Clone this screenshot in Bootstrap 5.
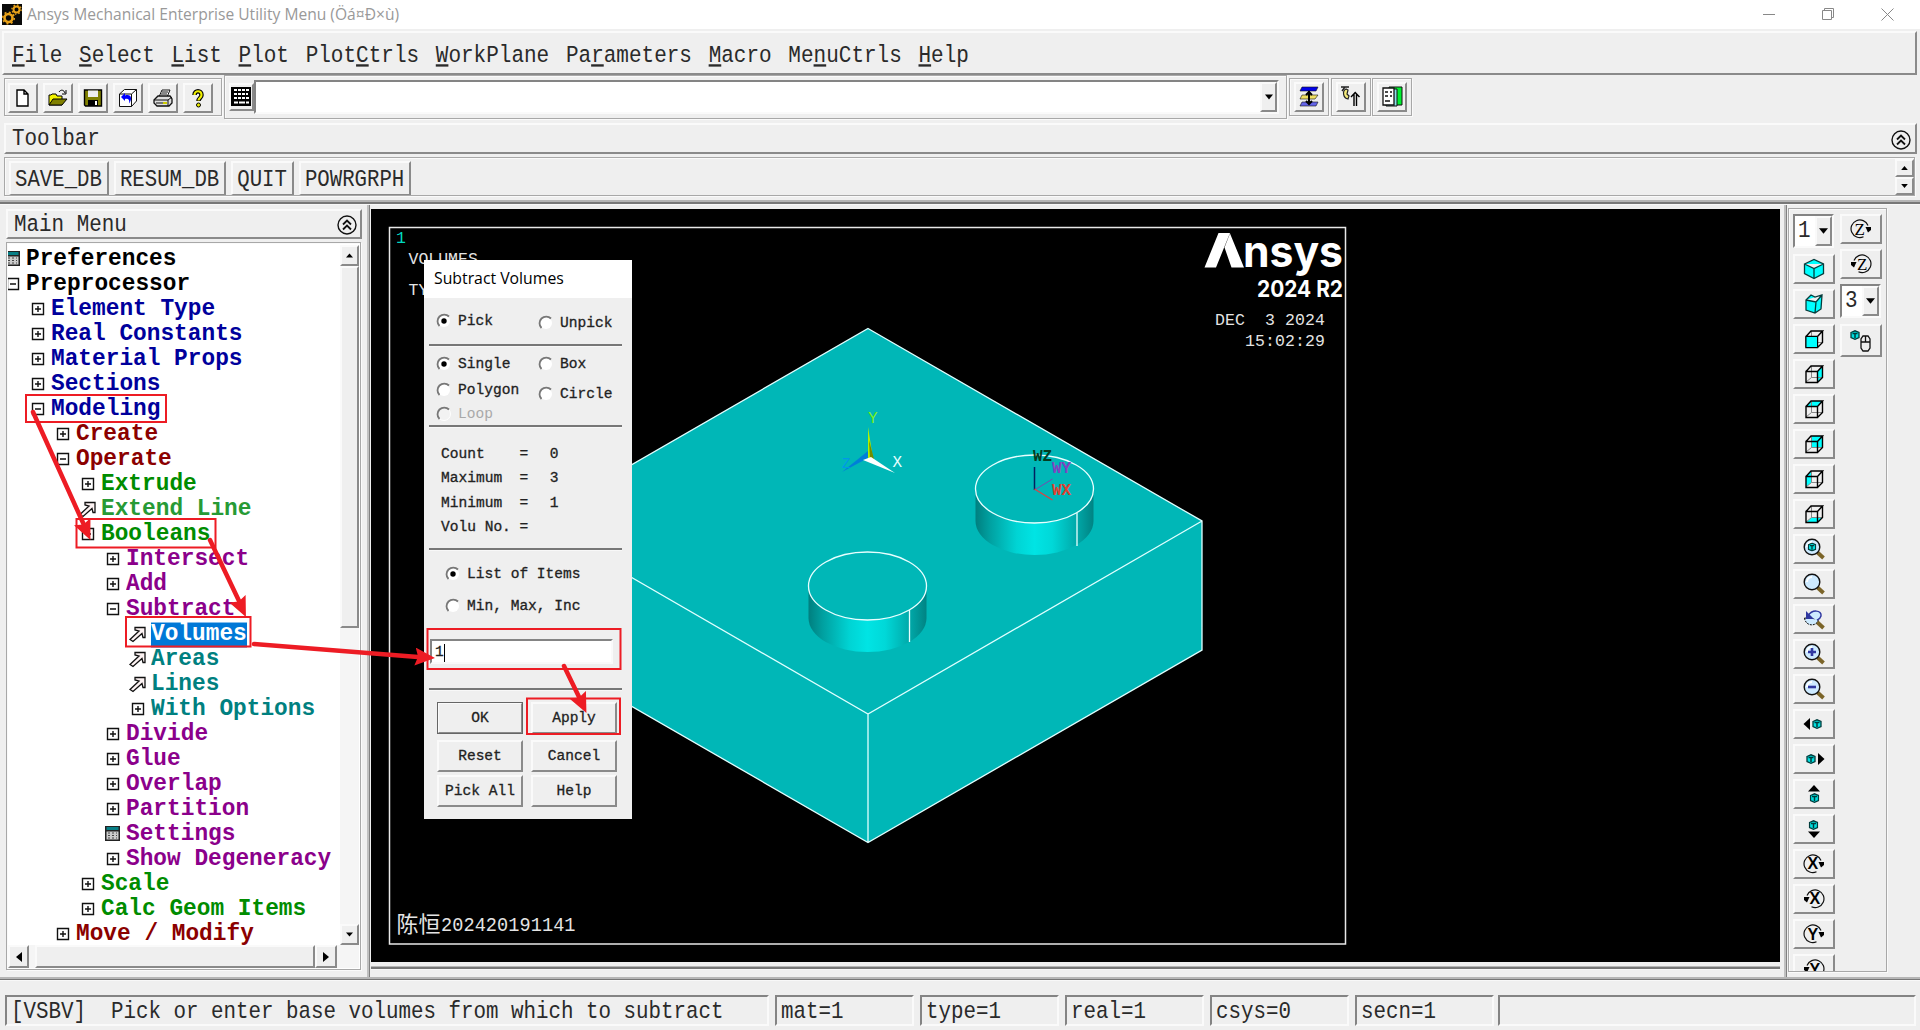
<!DOCTYPE html>
<html lang="en">
<head>
<meta charset="utf-8">
<title>Ansys Mechanical Enterprise Utility Menu</title>
<link rel="stylesheet" href="https://cdn.jsdelivr.net/npm/bootstrap@5.3.0/dist/css/bootstrap.min.css">
<style>
  html, body { width:1920px; height:1030px; overflow:hidden; }
  body { background:#efefef; color:#2a2a2a; font-family:"Liberation Mono","Noto Sans CJK SC",monospace; font-size:20.9px; line-height:1; position:relative; }
  svg { display:block; flex:none; }
  .mono { display:inline-block; white-space:pre; transform:scaleY(1.17); line-height:1; }
  .raised { border:2px solid; border-color:#fafafa #8a8a8a #8a8a8a #fafafa; background:#efefef; }
  .etched { border:1px solid #a8a8a8; box-shadow:inset 1px 1px #fafafa, 1px 1px #fafafa; }
  .sunken { border:2px solid; border-color:#848484 #fafafa #fafafa #848484; }
  .titlebar { height:29px; background:#fff; font-family:"Open Sans",sans-serif; color:#999; padding-left:2px; }
  .titlebar .caption { font-size:15.6px; margin-left:5px; white-space:nowrap; }
  .wincontrols { gap:46px; margin-right:26px; }
  .menubar { height:44px; margin:2px 3px 0 2px; padding:4px 0 0 8px; gap:16.7px; font-size:21px; border-width:2px; }
  .menubar u { text-decoration-thickness:2px; text-underline-offset:2px; }
  .iconbar { height:44px; margin:0 4px; gap:2px; }
  .icongroup { height:38px; width:218px; padding:4px 3px; gap:5px; }
  .tbtn { width:30px; height:30px; }
  .cmdgroup { width:1063px; height:44px; padding:4px 7px 4px 4px; }
  .cmdinput { height:34px; background:#fff; }
  .solo { width:40px; height:38px; padding:3px 4px; }
  .solo + .solo { margin-left:-.5px; }
  .tbtitle { height:31px; margin:4px 3px 0 4px; padding:2px 4px 0 6px; }
  .tbbuttons { height:39px; margin:3px 5px 0 4px; padding-left:4px; }
  .tbbuttons .abbr { height:34px; padding:7px 5px 0 4px; margin-right:5px; border-bottom-width:1px; font-size:20.7px; }
  .spin { width:19px; height:18px; }
  .band { height:4px; background:linear-gradient(#b5b5b5 50%,#777 50%); border-bottom:1px solid #f8f8f8; }
  .workarea { height:772px; }
  .leftpane { width:367px; padding:4px 5px 0 6px; }
  .lefttitle { height:30px; width:356px; padding:2px 3px 0 6px; }
  .treebox { height:728px; width:355px; margin-top:3px; background:#fff; padding:2px 1px 1px 1px; }
  .tree { width:332px; height:700px; overflow:hidden; font-weight:700; font-size:22.8px; padding-top:2px; background:#fff; }
  .node { height:25px; white-space:pre; }
  .node svg { margin-right:4px; margin-left:-5px; width:19px; }
  .node span { transform:scaleY(1.04); padding-bottom:1px; }
  .l1 { padding-left:25px; color:#00009c; } .l2 { padding-left:50px; color:#8b0000; }
  .l3 { padding-left:75px; color:#008c00; } .l4 { padding-left:100px; color:#8b008b; }
  .l5 { padding-left:125px; color:#008080; }
  .node .sel { background:#0078d7; color:#fff; }
  .lighter { color:#279a35; }
  .track { background:#f5f5f5; }
  .vdiv { width:4px; background:linear-gradient(90deg,#c0c0c0 40%,#808080 40%,#808080 75%,#efefef 75%); }
  .viewport { width:1409px; margin-top:4px; }
  .rightpane { padding:3px 0 0 0; }
  .rightbox { width:99px; height:764px; padding:5px 3px 0 4px; gap:4px; overflow:hidden; }
  .rcol { width:43px; gap:5px; }
  .rbtn { width:42px; height:30px; flex:none; }
  .rsel { width:41px; height:34px; background:#fff; margin-bottom:1px; flex:none; padding-left:3px; }
  .drop { width:17px; height:100%; }
  .status { height:31px; margin:14px 4px 0 5px; gap:6px; font-size:20.83px; }
  .cell { width:139px; padding:5px 0 0 4px; }
  .dlg { position:absolute; left:424px; top:260px; width:208px; height:559px; background:#efefef; font-size:14.55px; color:#222; -webkit-text-stroke:.3px #222; }
  .dlgtitle { height:38px; background:#fff; font-family:"Open Sans",sans-serif; font-size:15.8px; padding-left:10px; color:#000; -webkit-text-stroke:0; }
  .rule { height:3px; width:193px; background:#777; margin-left:5px; border-bottom:1px solid #f8f8f8; flex:none; }
  .opt { height:20px; gap:6px; padding-left:1px; white-space:pre; }
  .off { color:#a9a9a9; -webkit-text-stroke:0; }
  .dbtn { width:86px; height:32px; padding-top:1px; }
  .okbtn { outline:1px solid #666; outline-offset:-1px; }
  .notes { position:absolute; left:0; top:0; pointer-events:none; }
</style>
<script src="https://cdn.jsdelivr.net/npm/bootstrap@5.3.0/dist/js/bootstrap.bundle.min.js"></script>
</head>
<body>
<svg width="0" height="0" class="position-absolute">
  <defs>
    <symbol id="plus" viewBox="0 0 19 19"><path d="M4.500 3.500h11v11h-11zM7 9h6M10 6v6" fill="none" stroke="#111" stroke-width="1.400"/></symbol>
    <symbol id="minus" viewBox="0 0 19 19"><path d="M4.500 3.500h11v11h-11zM7 9h6" fill="none" stroke="#111" stroke-width="1.400"/></symbol>
    <symbol id="pick" viewBox="0 0 19 19"><path d="M2 14.500L11 6 7 5V2.500h10v10h-2l-1-4-9 8z" fill="#fdf3f3" stroke="#111" stroke-width="1.300"/></symbol>
    <symbol id="form" viewBox="0 0 19 19"><path d="M2 1h15v15H2z" fill="#222"/><path d="M3.500 2h12v3h-12z" fill="#087f86"/><path d="M3.500 6.500h12v8h-12z" fill="#ccc"/><path d="M5 8h2m2 0h2m2 0h1M5 10.500h2m2 0h2m2 0h1M5 13h2m2 0h2m2 0h1" stroke="#444"/></symbol>
    <symbol id="radio1" viewBox="0 0 16 16"><circle cx="8" cy="8" r="6" fill="#fff"/><path d="M3.500 13A6.500 6.500 0 0 1 13 3.500" fill="none" stroke="#777" stroke-width="1.800"/><circle cx="8" cy="8" r="2.700" fill="#000"/></symbol>
    <symbol id="radio0" viewBox="0 0 16 16"><circle cx="8" cy="8" r="6" fill="#fff"/><path d="M3.500 13A6.500 6.500 0 0 1 13 3.500" fill="none" stroke="#777" stroke-width="1.800"/></symbol>
    <symbol id="radiox" viewBox="0 0 16 16"><circle cx="8" cy="8" r="6.500" fill="#f2f2f2" stroke="#fff"/><path d="M3.500 13A6.500 6.500 0 0 1 13 3.500" fill="none" stroke="#777" stroke-width="1.800"/></symbol>
    <symbol id="collapse" viewBox="0 0 20 20"><circle cx="10" cy="10" r="9" fill="none" stroke="#111" stroke-width="1.400"/><path d="M6 9.500l4-4 4 4M6 14.500l4-4 4 4" fill="none" stroke="#111" stroke-width="1.800"/></symbol>
    <symbol id="dn" viewBox="0 0 10 6"><path d="M0 0h10L5 6z" fill="#000"/></symbol>
    <symbol id="up" viewBox="0 0 10 6"><path d="M0 6h10L5 0z" fill="#000"/></symbol>
    <symbol id="frame" viewBox="0 0 20 20"><path d="M7.500 2v11.500H19M7.500 13.500L2 18" fill="none" stroke="#888"/><path d="M2 7.500h11.500v11H2zM2 7.500L7 2h11.500l-5 5.500M18.500 2v11.500l-5 5" fill="none" stroke="#000" stroke-width="1.400"/></symbol>
    <symbol id="tiny" viewBox="0 0 10 10"><path d="M1 2.500L5 .8l4 1.700v5L5 9.300 1 7.500z" fill="#00e0e0" stroke="#003c3c" stroke-width="1.300"/><path d="M2.500 3.500h5M5 4v4" stroke="#003c3c" stroke-width="1.500"/></symbol>
    <symbol id="lens" viewBox="0 0 22 22"><path d="M14 14l6.500 6" stroke="#7b6428" stroke-width="3.800"/><circle cx="9" cy="9" r="7.800" fill="#cdeaff" stroke="#111" stroke-width="1.400"/><path d="M4 9a5 5 0 0 1 5-5" stroke="#fff" stroke-width="2" fill="none"/></symbol>
    <symbol id="cw" viewBox="0 0 22 20"><path d="M13.500 17.800A8.800 8.800 0 1 1 18 6.500" fill="none" stroke="#111" stroke-width="1.200"/><path d="M15.500 8H21v3l-3 2.500z" fill="#000"/></symbol>
    <symbol id="ccw" viewBox="0 0 22 20"><path d="M8.500 17.800A8.800 8.800 0 1 0 4 6.500" fill="none" stroke="#111" stroke-width="1.200"/><path d="M6.500 8H1v3l3 2.500z" fill="#000"/></symbol>
  </defs>
</svg>

<div class="d-flex flex-column">
  <header class="titlebar d-flex align-items-center">
    <svg width="20" height="21" viewBox="0 0 20 21"><path d="M0 0h20v21H0z" fill="#0a0a0a"/><g fill="none" stroke="#e9a21a"><circle cx="6.500" cy="14" r="4" stroke-width="2.600"/><circle cx="6.500" cy="14" r="5.800" stroke-width="1.500" stroke-dasharray="2 2.500"/><circle cx="14.500" cy="5.500" r="3" stroke-width="2"/><circle cx="14.500" cy="5.500" r="4.600" stroke-width="1.300" stroke-dasharray="1.600 2"/></g></svg>
    <span class="caption">Ansys Mechanical Enterprise Utility Menu (Öá¤Ð×ù)</span>
    <div class="wincontrols d-flex ms-auto">
      <svg width="13" height="13"><path d="M0 6.500h12" stroke="#888"/></svg>
      <svg width="13" height="13"><path d="M.5 2.500h9v9h-9zM2.500 2.500v-2h9v9h-2" fill="none" stroke="#888"/></svg>
      <svg width="13" height="13"><path d="M.5.500l12 12M12.500.500l-12 12" stroke="#888"/></svg>
    </div>
  </header>

  <nav class="menubar raised d-flex align-items-center">
    <span class="mono"><u>F</u>ile</span><span class="mono"><u>S</u>elect</span><span class="mono"><u>L</u>ist</span><span class="mono"><u>P</u>lot</span><span class="mono">Plot<u>C</u>trls</span><span class="mono"><u>W</u>orkPlane</span><span class="mono">Pa<u>r</u>ameters</span><span class="mono"><u>M</u>acro</span><span class="mono">Me<u>n</u>uCtrls</span><span class="mono"><u>H</u>elp</span>
  </nav>

  <div class="iconbar d-flex align-items-center">
    <div class="icongroup etched d-flex">
      <div class="tbtn raised d-flex align-items-center justify-content-center"><svg width="20" height="20"><path d="M4 2h7l4 4v12H4zM11 2v4h4" fill="#fff" stroke="#000" stroke-width="1.400"/></svg></div>
      <div class="tbtn raised d-flex align-items-center justify-content-center"><svg width="20" height="20"><path d="M1 17V7h2l1-1h4l1 2h5v9z" fill="#f2f200" stroke="#000"/><path d="M1 17l4-6h14l-5 6z" fill="#808000" stroke="#000"/><path d="M11 4c2-3 5-2 6 1m1-3v4h-4" fill="none" stroke="#000"/></svg></div>
      <div class="tbtn raised d-flex align-items-center justify-content-center"><svg width="20" height="20"><path d="M1.500 2h17v16h-16l-1-1z" fill="#808000" stroke="#000" stroke-width="1.400"/><path d="M5 2.500h10V9H5z" fill="#eee"/><path d="M5 12h10v6H5z"/><path d="M12 13h2v4h-2z" fill="#fff"/></svg></div>
      <div class="tbtn raised d-flex align-items-center justify-content-center"><svg width="20" height="20"><path d="M1.500 6l5-4.500h12V13l-5 5.500h-12zM1.500 6h12v12.500M13.500 6l5-4.500" fill="#fff" stroke="#111"/><path d="M3 9l4-4v2.500c6-2 8 3 4 8 1-4-1-5.500-4-4.500V13z" fill="#00f"/></svg></div>
      <div class="tbtn raised d-flex align-items-center justify-content-center"><svg width="20" height="20"><path d="M6 9l3-7h8l-3 7" fill="#fff" stroke="#111"/><path d="M1 12l4-4h12l2 3v4l-3 3H4l-3-3z" fill="#ddd" stroke="#111" stroke-width="1.300"/><path d="M1 12h14l4-3M15 12v6M9 4h6M8 6h6M3 15h10" stroke="#111" fill="none"/><path d="M10 15h4" stroke="#cc0" stroke-width="2"/></svg></div>
      <div class="tbtn raised d-flex align-items-center justify-content-center"><svg width="20" height="20"><path d="M6.500 7c0-5 7-5 7 0 0 3-3 3-3 6" fill="none" stroke="#000" stroke-width="4.500"/><path d="M6.500 7c0-5 7-5 7 0 0 3-3 3-3 5.500" fill="none" stroke="#f0f000" stroke-width="2.200"/><circle cx="10.500" cy="17" r="2" fill="#f0f000" stroke="#000"/></svg></div>
    </div>
    <div class="cmdgroup etched d-flex align-items-center">
      <div class="raised d-flex align-items-center"><svg width="21" height="24" viewBox="0 0 21 24"><path d="M0 2h20v19H0z"/><path d="M3 5h3m1 0h3m1 0h3m1 0h3M3 9h3m1 0h3m1 0h3m1 0h2M3 13h3m1 0h3m1 0h3m1 0h3M3 17.500h4m1 0h6m1 0h3" stroke="#fff" stroke-width="2"/></svg></div>
      <div class="cmdinput sunken d-flex flex-fill justify-content-end"><div class="drop raised d-flex align-items-center justify-content-center"><svg width="8" height="6"><use href="#dn"/></svg></div></div>
    </div>
    <div class="solo etched"><div class="tbtn raised d-flex align-items-center justify-content-center"><svg width="20" height="22"><g stroke="#111" stroke-width=".6"><path d="M3 1h16l-2 4H1z" fill="#0000e8"/><path d="M3 9h16l-3 4H1z" fill="#f0e060"/><path d="M3 16h16l-2 4H1z" fill="#6464e8"/></g><path d="M10 5v12M7 9l3-3 3 3M7 15l3 3 3-3" fill="none" stroke="#000" stroke-width="2"/></svg></div></div>
    <div class="solo etched"><div class="tbtn raised d-flex align-items-center justify-content-center"><svg width="20" height="22"><path d="M0 1h8M4 1L1 5" stroke="#222" stroke-width="1.400"/><path d="M5 3C1 5 2 12 7 13l1-3-2-2 1-4z" fill="#f3e97a" stroke="#222" stroke-width="1.200"/><path d="M13 20V8m2.500 12V8M10 11l4.200-4.500L18.500 11" fill="none" stroke="#000" stroke-width="1.400"/></svg></div></div>
    <div class="solo etched"><div class="tbtn raised d-flex align-items-center justify-content-center"><svg width="21" height="22"><path d="M7 1h13v18H8z" fill="#00f030" stroke="#111"/><path d="M4 3h11v17H4z" fill="#8ce0e8" stroke="#111"/><path d="M1 2h11v17H1z" fill="#fff" stroke="#111" stroke-width="1.300"/><path d="M3 6h3m2 0h2M3 10h3m2 0h2M3 15h5" stroke="#111" stroke-width="1.500"/></svg></div></div>
  </div>

  <div class="tbtitle raised d-flex align-items-center justify-content-between"><span class="mono">Toolbar</span><svg width="20" height="20"><use href="#collapse"/></svg></div>
  <div class="tbbuttons etched d-flex align-items-end">
    <div class="abbr raised"><span class="mono">SAVE_DB</span></div><div class="abbr raised"><span class="mono">RESUM_DB</span></div><div class="abbr raised"><span class="mono">QUIT</span></div><div class="abbr raised"><span class="mono">POWRGRPH</span></div>
    <div class="ms-auto"><div class="spin raised d-flex align-items-center justify-content-center"><svg width="7" height="4"><use href="#up"/></svg></div><div class="spin raised d-flex align-items-center justify-content-center"><svg width="7" height="4"><use href="#dn"/></svg></div></div>
  </div>
  <div class="band mt-1 pt-1"></div>

  <main class="workarea d-flex">
    <aside class="leftpane">
      <div class="lefttitle raised d-flex align-items-center justify-content-between"><span class="mono">Main Menu</span><svg width="20" height="20"><use href="#collapse"/></svg></div>
      <div class="treebox etched">
        <div class="d-flex">
          <div class="tree text-black">
            <div class="node d-flex align-items-center"><svg height="19"><use href="#form"/></svg><span>Preferences</span></div>
            <div class="node d-flex align-items-center"><svg height="19"><use href="#minus"/></svg><span>Preprocessor</span></div>
            <div class="node l1 d-flex align-items-center"><svg height="19"><use href="#plus"/></svg><span>Element Type</span></div>
            <div class="node l1 d-flex align-items-center"><svg height="19"><use href="#plus"/></svg><span>Real Constants</span></div>
            <div class="node l1 d-flex align-items-center"><svg height="19"><use href="#plus"/></svg><span>Material Props</span></div>
            <div class="node l1 d-flex align-items-center"><svg height="19"><use href="#plus"/></svg><span>Sections</span></div>
            <div class="node l1 d-flex align-items-center"><svg height="19"><use href="#minus"/></svg><span>Modeling</span></div>
            <div class="node l2 d-flex align-items-center"><svg height="19"><use href="#plus"/></svg><span>Create</span></div>
            <div class="node l2 d-flex align-items-center"><svg height="19"><use href="#minus"/></svg><span>Operate</span></div>
            <div class="node l3 d-flex align-items-center"><svg height="19"><use href="#plus"/></svg><span>Extrude</span></div>
            <div class="node l3 d-flex align-items-center"><svg height="19"><use href="#pick"/></svg><span class="lighter">Extend Line</span></div>
            <div class="node l3 d-flex align-items-center"><svg height="19"><use href="#minus"/></svg><span>Booleans</span></div>
            <div class="node l4 d-flex align-items-center"><svg height="19"><use href="#plus"/></svg><span>Intersect</span></div>
            <div class="node l4 d-flex align-items-center"><svg height="19"><use href="#plus"/></svg><span>Add</span></div>
            <div class="node l4 d-flex align-items-center"><svg height="19"><use href="#minus"/></svg><span>Subtract</span></div>
            <div class="node l5 d-flex align-items-center"><svg height="19"><use href="#pick"/></svg><span class="sel">Volumes</span></div>
            <div class="node l5 d-flex align-items-center"><svg height="19"><use href="#pick"/></svg><span>Areas</span></div>
            <div class="node l5 d-flex align-items-center"><svg height="19"><use href="#pick"/></svg><span>Lines</span></div>
            <div class="node l5 d-flex align-items-center"><svg height="19"><use href="#plus"/></svg><span>With Options</span></div>
            <div class="node l4 d-flex align-items-center"><svg height="19"><use href="#plus"/></svg><span>Divide</span></div>
            <div class="node l4 d-flex align-items-center"><svg height="19"><use href="#plus"/></svg><span>Glue</span></div>
            <div class="node l4 d-flex align-items-center"><svg height="19"><use href="#plus"/></svg><span>Overlap</span></div>
            <div class="node l4 d-flex align-items-center"><svg height="19"><use href="#plus"/></svg><span>Partition</span></div>
            <div class="node l4 d-flex align-items-center"><svg height="19"><use href="#form"/></svg><span>Settings</span></div>
            <div class="node l4 d-flex align-items-center"><svg height="19"><use href="#plus"/></svg><span>Show Degeneracy</span></div>
            <div class="node l3 d-flex align-items-center"><svg height="19"><use href="#plus"/></svg><span>Scale</span></div>
            <div class="node l3 d-flex align-items-center"><svg height="19"><use href="#plus"/></svg><span>Calc Geom Items</span></div>
            <div class="node l2 d-flex align-items-center"><svg height="19"><use href="#plus"/></svg><span>Move / Modify</span></div>
          </div>
          <div class="track d-flex flex-column flex-fill" style="height:700px">
            <div class="raised d-flex align-items-center justify-content-center" style="height:21px"><svg width="7" height="5"><use href="#up"/></svg></div>
            <div class="raised" style="height:362px"></div>
            <div class="raised d-flex align-items-center justify-content-center mt-auto" style="height:21px"><svg width="7" height="5"><use href="#dn"/></svg></div>
          </div>
        </div>
        <div class="track d-flex" style="height:23px">
          <div class="raised d-flex align-items-center justify-content-center" style="width:21px"><svg width="6" height="10"><path d="M6 0v10L0 5z"/></svg></div>
          <div class="raised" style="width:280px;margin-left:6px"></div>
          <div class="raised d-flex align-items-center justify-content-center" style="width:22px"><svg width="6" height="10"><path d="M0 0v10L6 5z"/></svg></div>
        </div>
      </div>
    </aside>
    <div class="vdiv"></div>

    <div>
    <svg class="viewport" height="753" viewBox="371 209 1409 753" font-family="Liberation Mono, Noto Sans CJK SC, monospace">
      <defs>
        <linearGradient id="side"><stop offset="0" stop-color="#007f7f"/><stop offset=".12" stop-color="#00a0a0"/><stop offset=".35" stop-color="#00d4d4"/><stop offset=".5" stop-color="#00e4e4"/><stop offset=".65" stop-color="#00d8d8"/><stop offset=".86" stop-color="#00a8a8"/><stop offset="1" stop-color="#008383"/></linearGradient>
      </defs>
      <path d="M371 209h1409v753H371z"/>
      <path d="M389.500 227.500h956v716.500h-956z" fill="none" stroke="#e8e8e8" stroke-width="1.500"/>
      <path d="M868 328.500l334 192.500v129L868 842.500 534 650V521z" fill="#00b7b7"/>
      <path d="M868 328.500l334 192.500v129L868 842.500 534 650V521zM534 521l334 193 334-193M868 714v128" fill="none" stroke="#e0ffff" stroke-width="1.300"/>
      <g stroke="#e8ffff" stroke-width="1.300">
        <path d="M975.500 489v32a59 34 0 0 0 118 0v-32z" fill="url(#side)" stroke="none"/><ellipse cx="1034.500" cy="489" rx="59" ry="34" fill="#00b7b7"/><path d="M1077 513v33"/>
        <path d="M808.500 586v32a59 34 0 0 0 118 0v-32z" fill="url(#side)" stroke="none"/><ellipse cx="867.500" cy="586" rx="59" ry="34" fill="#00b7b7"/><path d="M909.500 610v32"/>
      </g>
      <path d="M868 427l5 32h-5z" fill="#b4f000"/><path d="M869 440l5 19h-4z" fill="#708c00"/><path d="M868 451v7l-26 14z" fill="#007fd8"/><path d="M863 460l8-3 24 16z" fill="#fff"/>
      <g font-size="16">
        <text x="868" y="423" fill="#78f020">Y</text><text x="892.500" y="467" fill="#e8ffff">X</text><text x="842" y="468" fill="#0098e8" font-size="14">Z</text>
        <text x="1033" y="461" fill="#053c20" font-weight="bold">WZ</text><text x="1052" y="473" fill="#8044c0" font-weight="bold">WY</text><text x="1052" y="495" fill="#e04030" font-weight="bold">WX</text>
      </g>
      <path d="M1034.500 467v23" stroke="#002060" stroke-width="1.500"/><path d="M1034.500 490l18-11" stroke="#7848b0"/><path d="M1034.500 489l18 11" stroke="#e04040" stroke-width="1.300"/>
      <g font-size="16.500" fill="#e4e4e4">
        <text x="396" y="243" fill="#00d8c0">1</text><text x="408.500" y="264">VOLUMES</text><text x="408.500" y="295">TYPE NUM</text>
        <text x="1215" y="325" xml:space="preserve" textLength="110">DEC  3 2024</text><text x="1245" y="346" textLength="80">15:02:29</text>
      </g>
      <text x="396.500" y="932" fill="#e4e4e4" font-size="22">陈恒</text><text transform="translate(441 931) scale(1 1.120)" fill="#e4e4e4" font-size="18.600" textLength="134.500">202420191141</text>
      <g fill="#fff">
        <path d="M1204.500 267.500L1218.500 233h11.500l-14 34.500zM1230 233.500l14 34h-12.500l-7-20z"/>
        <text x="1243" y="267" font-family="Inter, sans-serif" font-weight="700" font-size="43" textLength="100" lengthAdjust="spacingAndGlyphs">nsys</text>
        <text x="1257" y="297" font-family="Inter, sans-serif" font-weight="700" font-size="23" textLength="86" lengthAdjust="spacingAndGlyphs">2024 R2</text>
      </g>
    </svg>
    <div class="band mt-1"></div>
    </div>

    <div class="vdiv ms-1"></div>
    <aside class="rightpane">
      <div class="rightbox etched d-flex">
        <div class="rcol d-flex flex-column">
          <div class="rsel sunken d-flex align-items-center justify-content-between"><span class="mono">1</span><div class="drop raised d-flex align-items-center justify-content-center"><svg width="9" height="6"><use href="#dn"/></svg></div></div>
          <div class="rbtn raised d-flex align-items-center justify-content-center"><svg width="22" height="22"><path d="M1.500 6L11 1.500 20.500 6v9.500L11 20.500 1.500 15.500zM1.500 6L11 10.500 20.500 6M11 10.500v10" fill="#0ff" stroke="#063c3c" stroke-width="1.300"/></svg></div>
          <div class="rbtn raised d-flex align-items-center justify-content-center"><svg width="20" height="22"><path d="M2 7l5-5 4 2 7-2-1 14-6 4-9-3zM2 7l10 2 6-7M12 9l-1 11" fill="#0ff" stroke="#063c3c" stroke-width="1.300"/></svg></div>
          <div class="rbtn raised d-flex align-items-center justify-content-center"><svg width="20" height="20"><use href="#frame"/><path d="M2 7.500h11.500v11H2z" fill="#0ff" stroke="#000"/></svg></div>
          <div class="rbtn raised d-flex align-items-center justify-content-center"><svg width="20" height="20"><path d="M13.500 7.500l5-5.500v11.500l-5 5z" fill="#0ff"/><use href="#frame"/></svg></div>
          <div class="rbtn raised d-flex align-items-center justify-content-center"><svg width="20" height="20"><path d="M2 7.500L7 2h11.500l-5 5.500z" fill="#0ff"/><use href="#frame"/></svg></div>
          <div class="rbtn raised d-flex align-items-center justify-content-center"><svg width="20" height="20"><path d="M7.500 2h11v11.500h-11z" fill="#0ff"/><use href="#frame"/></svg></div>
          <div class="rbtn raised d-flex align-items-center justify-content-center"><svg width="20" height="20"><path d="M2 7.500L7.500 2v11.500L2 18z" fill="#0ff"/><use href="#frame"/></svg></div>
          <div class="rbtn raised d-flex align-items-center justify-content-center"><svg width="20" height="20"><path d="M2 18.500l5.500-5h11l-5 5z" fill="#0ff"/><use href="#frame"/></svg></div>
          <div class="rbtn raised d-flex align-items-center justify-content-center"><svg width="22" height="22"><use href="#lens"/><use href="#tiny" x="4.500" y="4.500" width="9" height="9"/></svg></div>
          <div class="rbtn raised d-flex align-items-center justify-content-center"><svg width="22" height="22"><use href="#lens"/></svg></div>
          <div class="rbtn raised d-flex align-items-center justify-content-center"><svg width="22" height="22"><path d="M14 14l6.500 6" stroke="#7b6428" stroke-width="3.800"/><path d="M1.500 10c1 9 13 9 14 1z" fill="#cdeaff" stroke="#111" stroke-dasharray="2 1"/><path d="M5 8c4-7 14-6 13 0-1 3-2 3-4 4" fill="#cdeaff" stroke="#3038a0" stroke-width="1.500"/><path d="M3 3v8h8z" fill="#3038a0"/></svg></div>
          <div class="rbtn raised d-flex align-items-center justify-content-center"><svg width="22" height="22"><use href="#lens"/><path d="M5 9h8M9 5v8" stroke="#3038a0" stroke-width="2.600"/></svg></div>
          <div class="rbtn raised d-flex align-items-center justify-content-center"><svg width="22" height="22"><use href="#lens"/><path d="M5 9h8" stroke="#3038a0" stroke-width="2.600"/></svg></div>
          <div class="rbtn raised d-flex align-items-center justify-content-center"><svg width="22" height="14"><path d="M7 1v12L.5 7z"/><use href="#tiny" x="9" y="2" width="10" height="10"/></svg></div>
          <div class="rbtn raised d-flex align-items-center justify-content-center"><svg width="22" height="14"><path d="M15 1v12l6.500-6z"/><use href="#tiny" x="3" y="2" width="10" height="10"/></svg></div>
          <div class="rbtn raised d-flex align-items-center justify-content-center"><svg width="14" height="20"><path d="M1 7.500h12L7 1z"/><use href="#tiny" x="2.500" y="9" width="10" height="10"/></svg></div>
          <div class="rbtn raised d-flex align-items-center justify-content-center"><svg width="14" height="20"><path d="M1 12.500h12L7 19z"/><use href="#tiny" x="1.500" y="1" width="10" height="10"/></svg></div>
          <div class="rbtn raised d-flex align-items-center justify-content-center"><svg width="22" height="20"><use href="#cw"/><text x="4.500" y="15" font-size="16" font-family="Liberation Sans, sans-serif" font-weight="bold">X</text></svg></div>
          <div class="rbtn raised d-flex align-items-center justify-content-center"><svg width="22" height="20"><use href="#ccw"/><text x="6.500" y="15" font-size="16" font-family="Liberation Sans, sans-serif" font-weight="bold">X</text></svg></div>
          <div class="rbtn raised d-flex align-items-center justify-content-center"><svg width="22" height="20"><use href="#cw"/><text x="4.500" y="15.500" font-size="16" font-family="Liberation Sans, sans-serif" font-weight="bold">Y</text></svg></div>
          <div class="rbtn raised d-flex align-items-center justify-content-center"><svg width="22" height="20"><use href="#ccw"/><text x="6.500" y="15.500" font-size="16" font-family="Liberation Sans, sans-serif" font-weight="bold">Y</text></svg></div>
        </div>
        <div class="rcol d-flex flex-column">
          <div class="rbtn raised d-flex align-items-center justify-content-center"><svg width="22" height="20"><use href="#cw"/><text x="4.500" y="15.500" font-size="17" font-family="Liberation Serif, serif">Z</text></svg></div>
          <div class="rbtn raised d-flex align-items-center justify-content-center"><svg width="22" height="20"><use href="#ccw"/><text x="7" y="15.500" font-size="17" font-family="Liberation Serif, serif">Z</text></svg></div>
          <div class="rsel sunken d-flex align-items-center justify-content-between"><span class="mono">3</span><div class="drop raised d-flex align-items-center justify-content-center"><svg width="9" height="6"><use href="#dn"/></svg></div></div>
          <div class="rbtn raised d-flex align-items-center justify-content-center" style="height:33px"><svg width="22" height="22"><use href="#tiny" x="0" y="0" width="10" height="10"/><path d="M13 6h5l2 3v9l-2 3h-5l-2-3V9zM11 12h9M15.500 6v6" fill="#eee" stroke="#111" stroke-width="1.300"/></svg></div>
        </div>
      </div>
    </aside>
  </main>
  <div class="band"></div>

  <footer class="status d-flex">
    <div class="cell sunken" style="width:764px"><span class="mono">[VSBV]  Pick or enter base volumes from which to subtract</span></div>
    <div class="cell sunken"><span class="mono">mat=1</span></div>
    <div class="cell sunken"><span class="mono">type=1</span></div>
    <div class="cell sunken"><span class="mono">real=1</span></div>
    <div class="cell sunken"><span class="mono">csys=0</span></div>
    <div class="cell sunken"><span class="mono">secn=1</span></div>
    <div class="cell sunken flex-fill" style="margin-left:-2px"></div>
  </footer>
</div>

<section class="dlg">
  <div class="dlgtitle d-flex align-items-center">Subtract Volumes</div>
  <div class="d-flex" style="height:46px">
    <div class="opt d-flex align-items-center" style="margin:13px 0 0 11px;width:95px"><svg width="16" height="16"><use href="#radio1"/></svg>Pick</div>
    <div class="opt d-flex align-items-center" style="margin:15px 0 0 7px"><svg width="16" height="16"><use href="#radio0"/></svg>Unpick</div>
  </div>
  <div class="rule"></div>
  <div class="d-flex" style="height:78px">
    <div style="margin:7px 0 0 11px;width:95px">
      <div class="opt d-flex align-items-center"><svg width="16" height="16"><use href="#radio1"/></svg>Single</div>
      <div class="opt d-flex align-items-center" style="margin-top:6px"><svg width="16" height="16"><use href="#radio0"/></svg>Polygon</div>
      <div class="opt off d-flex align-items-center" style="margin-top:4px"><svg width="16" height="16"><use href="#radiox"/></svg>Loop</div>
    </div>
    <div style="margin:7px 0 0 7px">
      <div class="opt d-flex align-items-center"><svg width="16" height="16"><use href="#radio0"/></svg>Box</div>
      <div class="opt d-flex align-items-center" style="margin-top:10px"><svg width="16" height="16"><use href="#radio0"/></svg>Circle</div>
    </div>
  </div>
  <div class="rule"></div>
  <div style="height:120px;padding:14px 0 0 17px;white-space:pre;line-height:24.3px"><div>Count    = <span class="ms-1"> 0</span></div><div>Maximum  = <span class="ms-1"> 3</span></div><div>Minimum  = <span class="ms-1"> 1</span></div><div>Volu No. =</div></div>
  <div class="rule"></div>
  <div style="height:88px;padding:13px 0 0 20px">
    <div class="opt d-flex align-items-center"><svg width="16" height="16"><use href="#radio1"/></svg>List of Items</div>
    <div class="opt d-flex align-items-center" style="margin-top:12px"><svg width="16" height="16"><use href="#radio0"/></svg>Min, Max, Inc</div>
  </div>
  <div class="sunken bg-white d-flex align-items-center" style="width:183px;height:25px;margin-left:6px;padding:2px 0 0 3px">1<svg width="2" height="18"><path d="M0 0h1v18H0z"/></svg></div>
  <div class="rule" style="margin-top:24px"></div>
  <div class="d-grid" style="grid-template-columns:86px 86px;column-gap:8px;margin:11px 0 0 13px">
    <div class="dbtn raised okbtn d-flex align-items-center justify-content-center">OK</div><div class="dbtn raised d-flex align-items-center justify-content-center">Apply</div>
    <div class="dbtn raised d-flex align-items-center justify-content-center" style="margin-top:6px">Reset</div><div class="dbtn raised d-flex align-items-center justify-content-center" style="margin-top:6px">Cancel</div>
    <div class="dbtn raised d-flex align-items-center justify-content-center" style="margin-top:3px">Pick All</div><div class="dbtn raised d-flex align-items-center justify-content-center" style="margin-top:3px">Help</div>
  </div>
</section>

<svg class="notes" width="1920" height="1030">
  <defs><marker id="head" markerUnits="userSpaceOnUse" markerWidth="24" markerHeight="20" refX="19" refY="9" orient="auto"><path d="M0 0L20 9 0 18l3-9z" fill="#ed1c24"/></marker></defs>
  <g fill="none" stroke="#ed1c24">
    <path d="M26 395h140v27H26zM76.500 519h139v28.500h-139zM126 617h124.500v29.500H126zM427.500 629h193v40h-193zM527 698.500h93v35.500h-93z" stroke-width="2"/>
    <g stroke-width="4.500" stroke-linecap="round"><path d="M33 412L84 525M210 540l30 63M254 644l164 13M564 666l16 33"/></g>
    <g stroke="none"><path d="M33 412L90 539" marker-end="url(#head)"/><path d="M210 540l35.500 76" marker-end="url(#head)"/><path d="M254 644l180 14" marker-end="url(#head)"/><path d="M564 666l22 46" marker-end="url(#head)"/></g>
  </g>
</svg>
</body>
</html>
